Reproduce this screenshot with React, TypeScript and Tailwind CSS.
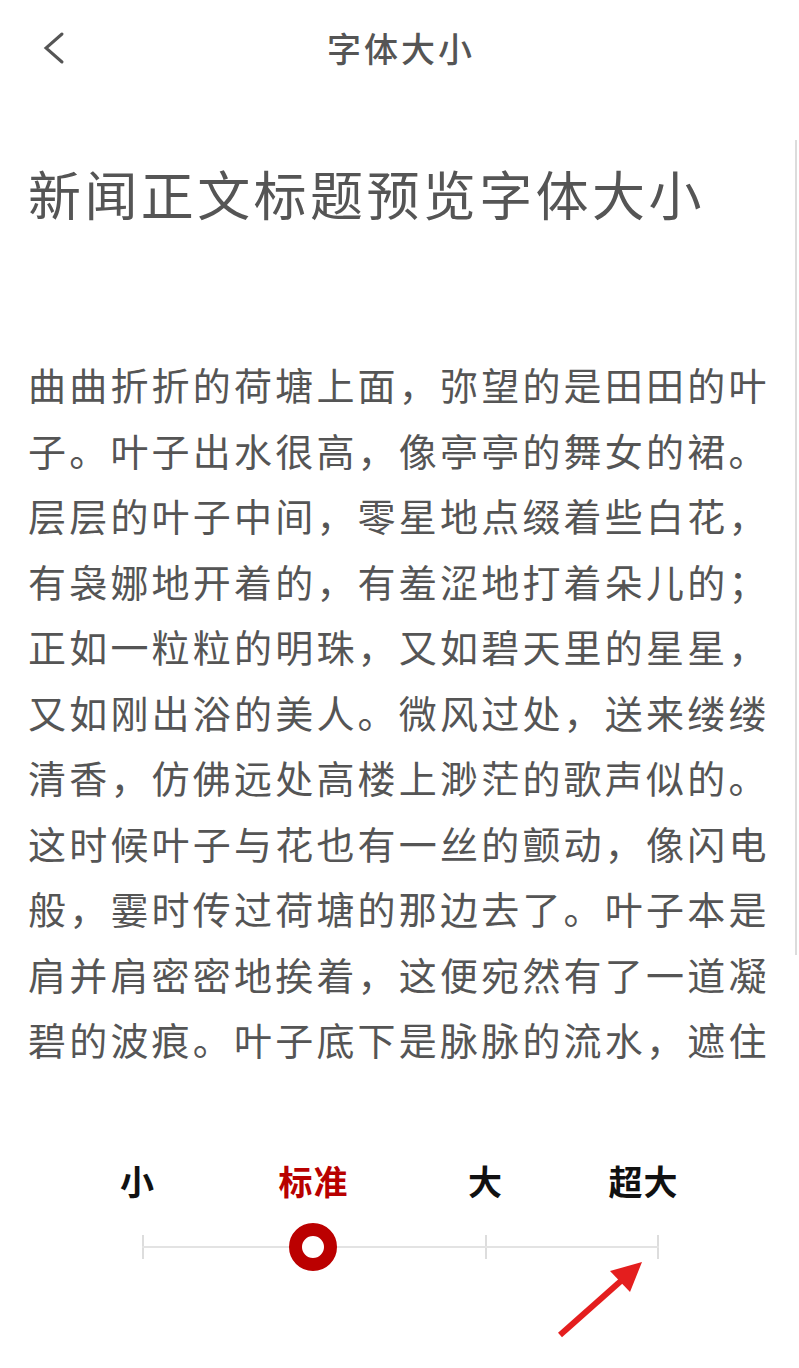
import React from "react";

const lines = [
  "曲曲折折的荷塘上面，弥望的是田田的叶",
  "子。叶子出水很高，像亭亭的舞女的裙。",
  "层层的叶子中间，零星地点缀着些白花，",
  "有袅娜地开着的，有羞涩地打着朵儿的；",
  "正如一粒粒的明珠，又如碧天里的星星，",
  "又如刚出浴的美人。微风过处，送来缕缕",
  "清香，仿佛远处高楼上渺茫的歌声似的。",
  "这时候叶子与花也有一丝的颤动，像闪电",
  "般，霎时传过荷塘的那边去了。叶子本是",
  "肩并肩密密地挨着，这便宛然有了一道凝",
  "碧的波痕。叶子底下是脉脉的流水，遮住",
];

const sizes = [
  { label: "小", ml: "ml-[97px]", active: false },
  { label: "标准", ml: "ml-[96px]", active: true },
  { label: "大", ml: "ml-[92px]", active: false },
  { label: "超大", ml: "ml-[78px]", active: false },
];

export default function App() {
  return (
    <div
      className="relative h-[1368px] w-[799px] overflow-hidden bg-white text-[#555555]"
      style={{ fontFamily: '"Noto Sans CJK SC", "Noto Sans", sans-serif' }}
    >
      {/* header */}
      <div className="grid h-[96px] grid-cols-[120px_1fr_120px] items-center">
        <div className="pl-[42px]">
          <svg width="24" height="34" viewBox="0 0 24 34" fill="none">
            <path d="M20 3 L4 17 L20 31" stroke="#555" strokeWidth="3" strokeLinecap="round" strokeLinejoin="miter" />
          </svg>
        </div>
        <div className="pl-[3px] text-center text-[34px] font-medium leading-none tracking-[3px]">字体大小</div>
        <div />
      </div>

      {/* title */}
      <div className="mt-[61px] whitespace-nowrap px-[28px] text-[53px] leading-[72px] tracking-[3.4px]">
        新闻正文标题预览字体大小
      </div>

      {/* body preview */}
      <div className="mt-[122px] px-[28px] text-[38px] leading-[65.5px] tracking-[3.2px]">
        {lines.map((line) => (
          <div key={line} className="whitespace-nowrap">
            {line}
          </div>
        ))}
      </div>

      {/* size picker */}
      <div className="mt-[89px]">
        <div className="flex h-[40px] items-center">
          {sizes.map((s) => (
            <div
              key={s.label}
              className={`${s.ml} w-[80px] shrink-0 pl-[1px] text-center text-[34px] font-semibold leading-none tracking-[1px] ${
                s.active ? "text-[#b80000]" : "text-[#111111]"
              }`}
            >
              {s.label}
            </div>
          ))}
        </div>
        <div className="relative ml-[142px] mt-[22px] h-[48px] w-[517px]">
          <div className="absolute left-0 right-0 top-[23px] h-[2px] bg-[#e3e3e3]" />
          <div className="flex h-full items-center justify-between">
            <div className="h-[24px] w-[2px] bg-[#dddddd]" />
            <div className="h-[24px] w-[2px] bg-transparent" />
            <div className="h-[24px] w-[2px] bg-[#dddddd]" />
            <div className="h-[24px] w-[2px] bg-[#dddddd]" />
          </div>
          <div className="absolute left-[147px] top-0 h-[48px] w-[48px] rounded-full border-[13px] border-[#bb0000] bg-white" />
        </div>
      </div>

      {/* annotation arrow */}
      <svg className="absolute left-[550px] top-[1255px]" width="100" height="90" viewBox="550 1255 100 90">
        <line x1="560" y1="1335" x2="622" y2="1280" stroke="#e41e1e" strokeWidth="6" />
        <polygon points="642,1262 610,1271 630,1292" fill="#e41e1e" />
      </svg>

      {/* scrollbar */}
      <div className="absolute left-[795px] top-[140px] h-[815px] w-[2px] bg-[#dcdcdc]" />
    </div>
  );
}
